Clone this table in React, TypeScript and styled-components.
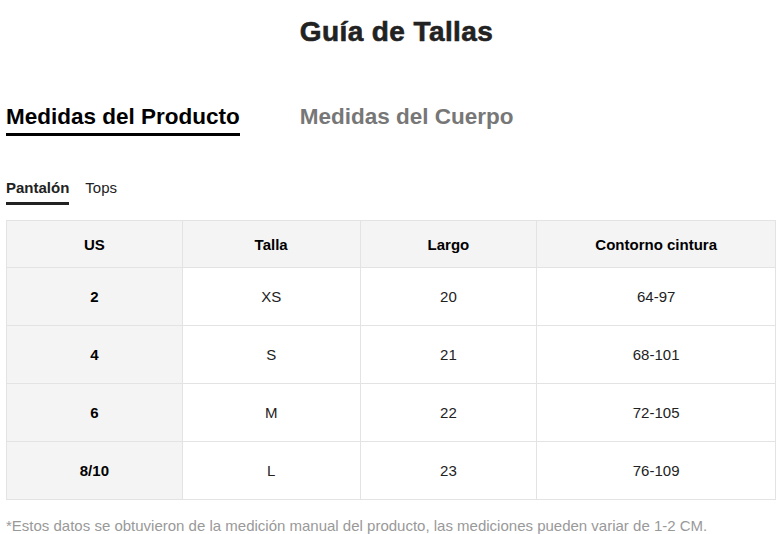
import React, { useState } from "react";
import styled, { createGlobalStyle } from "styled-components";

const GlobalStyle = createGlobalStyle`
  body {
    margin: 0;
    background: #fff;
    font-family: "Liberation Sans", Arial, sans-serif;
    color: #222;
  }
`;

const Page = styled.div`
  display: flex;
  flex-direction: column;
  padding: 0 5px 0 6px;
`;

const Title = styled.h1`
  margin: 15px 0 0;
  padding-left: 11px;
  text-align: center;
  font-size: 28px;
  font-weight: 700;
  line-height: 34px;
  color: #222;
  letter-spacing: 0.4px;
  -webkit-text-stroke: 0.6px #222;
`;

const MainTabs = styled.div`
  display: flex;
  gap: 60px;
  margin-top: 54px;
`;

const MainTab = styled.div<{ active: boolean }>`
  font-size: 22.5px;
  font-weight: 700;
  line-height: 28px;
  padding-bottom: 2px;
  color: ${({ active }) => (active ? "#000" : "#777")};
  border-bottom: 3px solid ${({ active }) => (active ? "#000" : "transparent")};
  cursor: pointer;
`;

const SubTabs = styled.div`
  display: flex;
  gap: 16px;
  margin-top: 43px;
`;

const SubTab = styled.div<{ active: boolean }>`
  font-size: 15px;
  line-height: 18px;
  padding-bottom: 5px;
  font-weight: ${({ active }) => (active ? 700 : 400)};
  color: #222;
  border-bottom: 3px solid ${({ active }) => (active ? "#222" : "transparent")};
  cursor: pointer;
`;

const Table = styled.div`
  display: grid;
  grid-template-columns: 176fr 178fr 177fr 239fr;
  margin-top: 15px;
  border-top: 1px solid #e3e3e3;
  border-left: 1px solid #e3e3e3;
`;

const Cell = styled.div<{ head?: boolean; shaded?: boolean }>`
  display: flex;
  align-items: center;
  justify-content: center;
  box-sizing: border-box;
  height: ${({ head }) => (head ? "47px" : "58px")};
  padding-top: ${({ head }) => (head ? "1px" : "0")};
  border-right: 1px solid #e3e3e3;
  border-bottom: 1px solid #e3e3e3;
  background: ${({ shaded }) => (shaded ? "#f4f4f4" : "#fff")};
  font-size: 15px;
  font-weight: ${({ shaded }) => (shaded ? 700 : 400)};
  color: ${({ shaded }) => (shaded ? "#000" : "#222")};
`;

const Note = styled.p`
  margin: 17px 0 0;
  font-size: 15px;
  color: #999;
`;

const headers = ["US", "Talla", "Largo", "Contorno cintura"];
const rows = [
  ["2", "XS", "20", "64-97"],
  ["4", "S", "21", "68-101"],
  ["6", "M", "22", "72-105"],
  ["8/10", "L", "23", "76-109"],
];

export default function App() {
  const [main, setMain] = useState(0);
  const [sub, setSub] = useState(0);

  return (
    <Page>
      <GlobalStyle />
      <Title>Guía de Tallas</Title>
      <MainTabs>
        {["Medidas del Producto", "Medidas del Cuerpo"].map((t, i) => (
          <MainTab key={t} active={main === i} onClick={() => setMain(i)}>
            {t}
          </MainTab>
        ))}
      </MainTabs>
      <SubTabs>
        {["Pantalón", "Tops"].map((t, i) => (
          <SubTab key={t} active={sub === i} onClick={() => setSub(i)}>
            {t}
          </SubTab>
        ))}
      </SubTabs>
      <Table>
        {headers.map((h) => (
          <Cell key={h} head shaded>
            {h}
          </Cell>
        ))}
        {rows.map((r) =>
          r.map((v, j) => (
            <Cell key={r[0] + j} shaded={j === 0}>
              {v}
            </Cell>
          ))
        )}
      </Table>
      <Note>
        *Estos datos se obtuvieron de la medición manual del producto, las
        mediciones pueden variar de 1-2 CM.
      </Note>
    </Page>
  );
}
